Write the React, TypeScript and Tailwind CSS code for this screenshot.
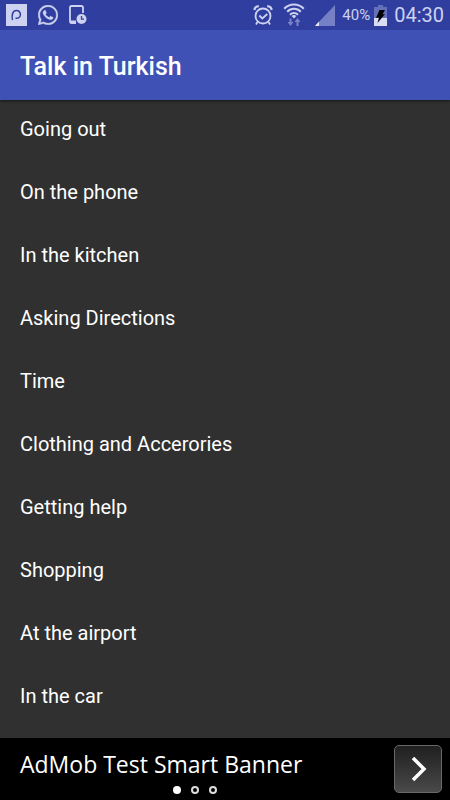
const topics = [
  'Going out',
  'On the phone',
  'In the kitchen',
  'Asking Directions',
  'Time',
  'Clothing and Accerories',
  'Getting help',
  'Shopping',
  'At the airport',
  'In the car',
]

function AppBadgeIcon() {
  return (
    <svg width="21" height="22" viewBox="0 0 21 22" fill="none" aria-hidden="true">
      <path fill="#cdd2f0" d="M0 0h21v22H0z" />
      <path
        d="M6.500 16C5.500 11 6.500 6.500 10.500 6.500a3.900 3.900 0 0 1 0 7.800H9.500"
        stroke="#303f9f"
        strokeWidth="1.500"
      />
    </svg>
  )
}

function WhatsAppIcon() {
  return (
    <svg width="20" height="20" viewBox="0 0 24 24" fill="#cdd2f0" stroke="#cdd2f0" strokeWidth=".4" aria-hidden="true">
      <path d="M17.472 14.382c-.297-.149-1.758-.867-2.030-.967-.273-.099-.471-.148-.670.150-.197.297-.767.966-.940 1.164-.173.199-.347.223-.644.075-.297-.150-1.255-.463-2.390-1.475-.883-.788-1.480-1.761-1.653-2.059-.173-.297-.018-.458.130-.606.134-.133.298-.347.446-.520.149-.174.198-.298.298-.497.099-.198.050-.371-.025-.520-.075-.149-.669-1.612-.916-2.207-.242-.579-.487-.500-.669-.510-.173-.008-.371-.010-.570-.010-.198 0-.520.074-.792.372-.272.297-1.040 1.016-1.040 2.479 0 1.462 1.065 2.875 1.213 3.074.149.198 2.096 3.200 5.077 4.487.709.306 1.262.489 1.694.625.712.227 1.360.195 1.871.118.571-.085 1.758-.719 2.006-1.413.248-.694.248-1.289.173-1.413-.074-.124-.272-.198-.570-.347M12.050 21.785h-.004a9.870 9.870 0 0 1-5.031-1.378l-.361-.214-3.741.982.998-3.648-.235-.374a9.860 9.860 0 0 1-1.510-5.260c.001-5.450 4.436-9.884 9.888-9.884 2.640 0 5.122 1.030 6.988 2.898a9.825 9.825 0 0 1 2.893 6.994c-.003 5.450-4.437 9.884-9.885 9.884m8.413-18.297A11.815 11.815 0 0 0 12.050 0C5.495 0 .160 5.335.157 11.892c0 2.096.547 4.142 1.588 5.945L.057 24l6.305-1.654a11.882 11.882 0 0 0 5.683 1.448h.005c6.554 0 11.890-5.335 11.893-11.893a11.821 11.821 0 0 0-3.480-8.413z" />
    </svg>
  )
}

function PhoneClockIcon() {
  return (
    <svg width="18" height="20" viewBox="0 0 18 20" fill="none" aria-hidden="true">
      <path
        d="M7 18H2.500A1.500 1.500 0 0 1 1 16.500V2.500A1.500 1.500 0 0 1 2.500 1h10A1.500 1.500 0 0 1 14 2.500V8"
        stroke="#cdd2f0"
        strokeWidth="1.800"
      />
      <path d="M1 15.500h6V19H2.500z" fill="#cdd2f0" />
      <circle cx="12.500" cy="14" r="5" fill="#cdd2f0" />
      <path d="M12.500 11v3.200H15" stroke="#303f9f" strokeWidth="1.300" />
    </svg>
  )
}

function AlarmIcon() {
  return (
    <svg width="20" height="22" viewBox="0 0 20 22" fill="none" stroke="#cdd2f0" aria-hidden="true">
      <circle cx="10" cy="12" r="7.500" strokeWidth="1.800" />
      <path d="M1.300 6c.3-2 2.200-3.700 4.500-3.800M18.700 6c-.3-2-2.200-3.700-4.500-3.800" strokeWidth="2.200" />
      <path d="m6.300 11.500 3 3 5-4.500" strokeWidth="1.800" />
      <path d="m4.500 18-1.500 2.500M15.500 18l1.500 2.500" strokeWidth="1.800" />
    </svg>
  )
}

function WifiIcon() {
  return (
    <svg width="22" height="24" viewBox="0 0 22 24" fill="none" aria-hidden="true">
      <g stroke="#cdd2f0" strokeWidth="2">
        <path d="M1.200 5.700C6.500.1 15.500.1 20.800 5.700" />
        <path d="M4.200 8.700c3.800-4 9.800-4 13.600 0" />
        <path d="M7 11.700c2.300-2.300 5.700-2.300 8 0" />
      </g>
      <path d="M8.600 13c1.400-1.300 3.400-1.300 4.800 0L11 15.500z" fill="#cdd2f0" />
      <path d="M6.500 15.500h2V19h2l-3 4-3-4h2zM13.500 23h2v-4h2l-3-4-3 4h2z" fill="#7984c8" />
    </svg>
  )
}

function SignalIcon() {
  return (
    <svg width="20" height="21" viewBox="0 0 20 21" aria-hidden="true">
      <path d="M20 0v21H0z" fill="#7680c4" />
      <path d="M4 16.500V21H0z" fill="#e4e7fa" />
    </svg>
  )
}

function BatteryIcon() {
  return (
    <svg width="13" height="21" viewBox="0 0 13 21" aria-hidden="true">
      <path d="M4 0h5v2h4v19H0V2h4z" fill="#6570ba" />
      <path d="M0 13h13v8H0z" fill="#d8dcf4" />
      <path d="M5.500 5H11L8.500 9.500 11 9 3.500 18 5 12.500 2 13z" fill="#000" />
    </svg>
  )
}

function StatusBar() {
  return (
    <div className="relative z-20 flex h-[30px] items-center justify-between bg-[#303f9f] px-1.5 text-[#cdd2f0]">
      <div className="flex items-center gap-[11px]">
        <AppBadgeIcon />
        <WhatsAppIcon />
        <PhoneClockIcon />
      </div>
      <div className="flex items-center">
        <AlarmIcon />
        <span className="ml-[10px]">
          <WifiIcon />
        </span>
        <span className="ml-[10px]">
          <SignalIcon />
        </span>
        <span className="ml-[7px] text-[15px] leading-5">40%</span>
        <span className="ml-1">
          <BatteryIcon />
        </span>
        <span className="ml-[7px] text-[20px] leading-6">04:30</span>
      </div>
    </div>
  )
}

function AdBanner() {
  return (
    <aside className="relative flex h-[62px] items-start justify-between bg-black pt-[7px] pr-2 pl-5">
      <p className="font-['Open_Sans',sans-serif] text-[23px] leading-[38px] text-white">AdMob Test Smart Banner</p>
      <button
        type="button"
        aria-label="Open ad"
        className="flex size-12 items-center justify-center rounded-[5px] border border-[#686868] bg-linear-to-b from-[#202020] to-[#4a4a4a]"
      >
        <svg width="18" height="26" viewBox="0 0 18 26" fill="none" aria-hidden="true">
          <path d="m4 2 11 11L4 24" stroke="#fff" strokeWidth="3.500" />
        </svg>
      </button>
      <div className="absolute inset-x-0 bottom-1.5 flex justify-center gap-2.5 pr-[60px]">
        <span className="size-2 rounded-full bg-white" />
        <span className="size-2 rounded-full border-2 border-[#dddddd]" />
        <span className="size-2 rounded-full border-2 border-[#dddddd]" />
      </div>
    </aside>
  )
}

export default function App() {
  return (
    <div className="flex min-h-screen flex-col bg-[#303030] font-[Roboto,sans-serif] text-white">
      <StatusBar />
      <header className="z-10 flex h-[70px] items-center bg-[#3f51b5] px-5 pt-1 shadow-[0_1px_3px_rgba(0,0,0,0.6)]">
        <h1 className="text-[25px] leading-8 font-medium">Talk in Turkish</h1>
      </header>
      <main className="flex-1">
        <ul>
          {topics.map((topic) => (
            <li key={topic} className="h-[63px] px-5 pt-[17px] text-[20px] leading-6">
              {topic}
            </li>
          ))}
        </ul>
      </main>
      <AdBanner />
    </div>
  )
}
